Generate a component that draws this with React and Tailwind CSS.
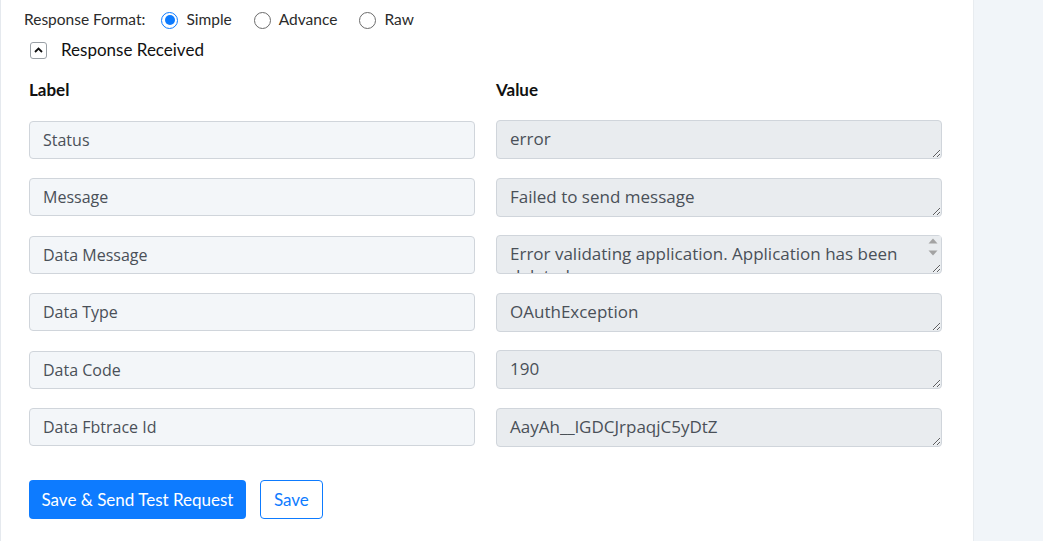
import React from "react";

const rows = [
  ["Status", "error"],
  ["Message", "Failed to send message"],
  ["Data Message", "Error validating application. Application has been deleted.", true],
  ["Data Type", "OAuthException"],
  ["Data Code", "190"],
  ["Data Fbtrace Id", "AayAh__lGDCJrpaqjC5yDtZ"],
];

function Radio({ checked, label }) {
  return (
    <label className="flex items-center gap-[8px]">
      <span
        className={
          "w-[17px] h-[17px] rounded-full flex items-center justify-center bg-white " +
          (checked ? "border-[1.5px] border-[#0d7bff]" : "border border-[#6b6b6b]")
        }
      >
        {checked && <span className="w-[10px] h-[10px] rounded-full bg-[#0d7bff]" />}
      </span>
      <span>{label}</span>
    </label>
  );
}

export default function App() {
  return (
    <div className="flex w-[1043px] h-[541px] overflow-hidden bg-[#f1f5f9] font-['Lato',sans-serif]">
      <div className="w-[973px] h-full bg-white border-l border-[#e5e9ee] pl-[28px] pr-[31px]">
        <div className="flex items-center h-[40px] text-[15.5px] text-[#2b2b2b] -ml-[5px]">
          <span className="mr-[16px]">Response Format:</span>
          <div className="flex items-center gap-[22px]">
            <Radio checked label="Simple" />
            <Radio label="Advance" />
            <Radio label="Raw" />
          </div>
        </div>
        <div className="flex items-center h-[20px] text-[17px] text-[#111]">
          <span className="w-[17px] h-[17px] ml-[1px] border border-[#9aa0a6] rounded-[3px] flex items-center justify-center">
            <svg width="9" height="6" viewBox="0 0 9 6">
              <path d="M1 5 L4.5 1.5 L8 5" fill="none" stroke="#111" strokeWidth="1.8" />
            </svg>
          </span>
          <span className="ml-[14px]">Response Received</span>
        </div>
        <div className="grid grid-cols-2 gap-x-[21px] mt-[20px]">
          <div className="text-[17px] font-bold text-[#111] h-[20px] leading-[20px]">Label</div>
          <div className="text-[17px] font-bold text-[#111] h-[20px] leading-[20px]">Value</div>
        </div>
        <div className="flex flex-col gap-[18.6px] mt-[20px] font-['Open_Sans',sans-serif] text-[#4a5058]">
          {rows.map(([l, v, scroll]) => (
            <div key={l} className="grid grid-cols-2 gap-x-[21px] items-center">
              <input
                readOnly
                value={l}
                className="h-[38px] bg-[#f3f6f9] border border-[#d0d5db] rounded-[4px] px-[13px] text-[16px] outline-none"
              />
              <div className="relative h-[39px]">
                <textarea
                  readOnly
                  value={v}
                  rows={1}
                  className={
                    "w-full h-[39px] bg-[#e9ecef] border border-[#d0d5db] rounded-[4px] pl-[13px] pt-[7px] pb-[6px] leading-[22px] text-[17px] outline-none block " +
                    (scroll ? "pr-[20px] overflow-hidden" : "pr-[13px]")
                  }
                />
                {scroll && (
                  <div className="absolute right-[1px] top-[1px] w-[16px] h-[23px] flex flex-col items-center pt-[2px] gap-[6px] bg-[#e9ecef]">
                    <svg width="10" height="6" viewBox="0 0 10 6">
                      <path d="M0.5 5.5 L5 0.5 L9.5 5.5 Z" fill="#a3a3a3" />
                    </svg>
                    <svg width="10" height="6" viewBox="0 0 10 6">
                      <path d="M0.5 0.5 L5 5.5 L9.5 0.5 Z" fill="#a3a3a3" />
                    </svg>
                  </div>
                )}
              </div>
            </div>
          ))}
        </div>
        <div className="flex items-center gap-[14px] mt-[33px]">
          <button className="h-[39px] px-[12.5px] bg-[#0d7bff] text-white text-[17px] rounded-[4px]">
            Save &amp; Send Test Request
          </button>
          <button className="h-[39px] px-[13px] bg-white text-[#0d7bff] text-[17px] border border-[#0d7bff] rounded-[4px]">
            Save
          </button>
        </div>
      </div>
      <div className="flex-1 border-l border-[#e8ecf0]" />
    </div>
  );
}
